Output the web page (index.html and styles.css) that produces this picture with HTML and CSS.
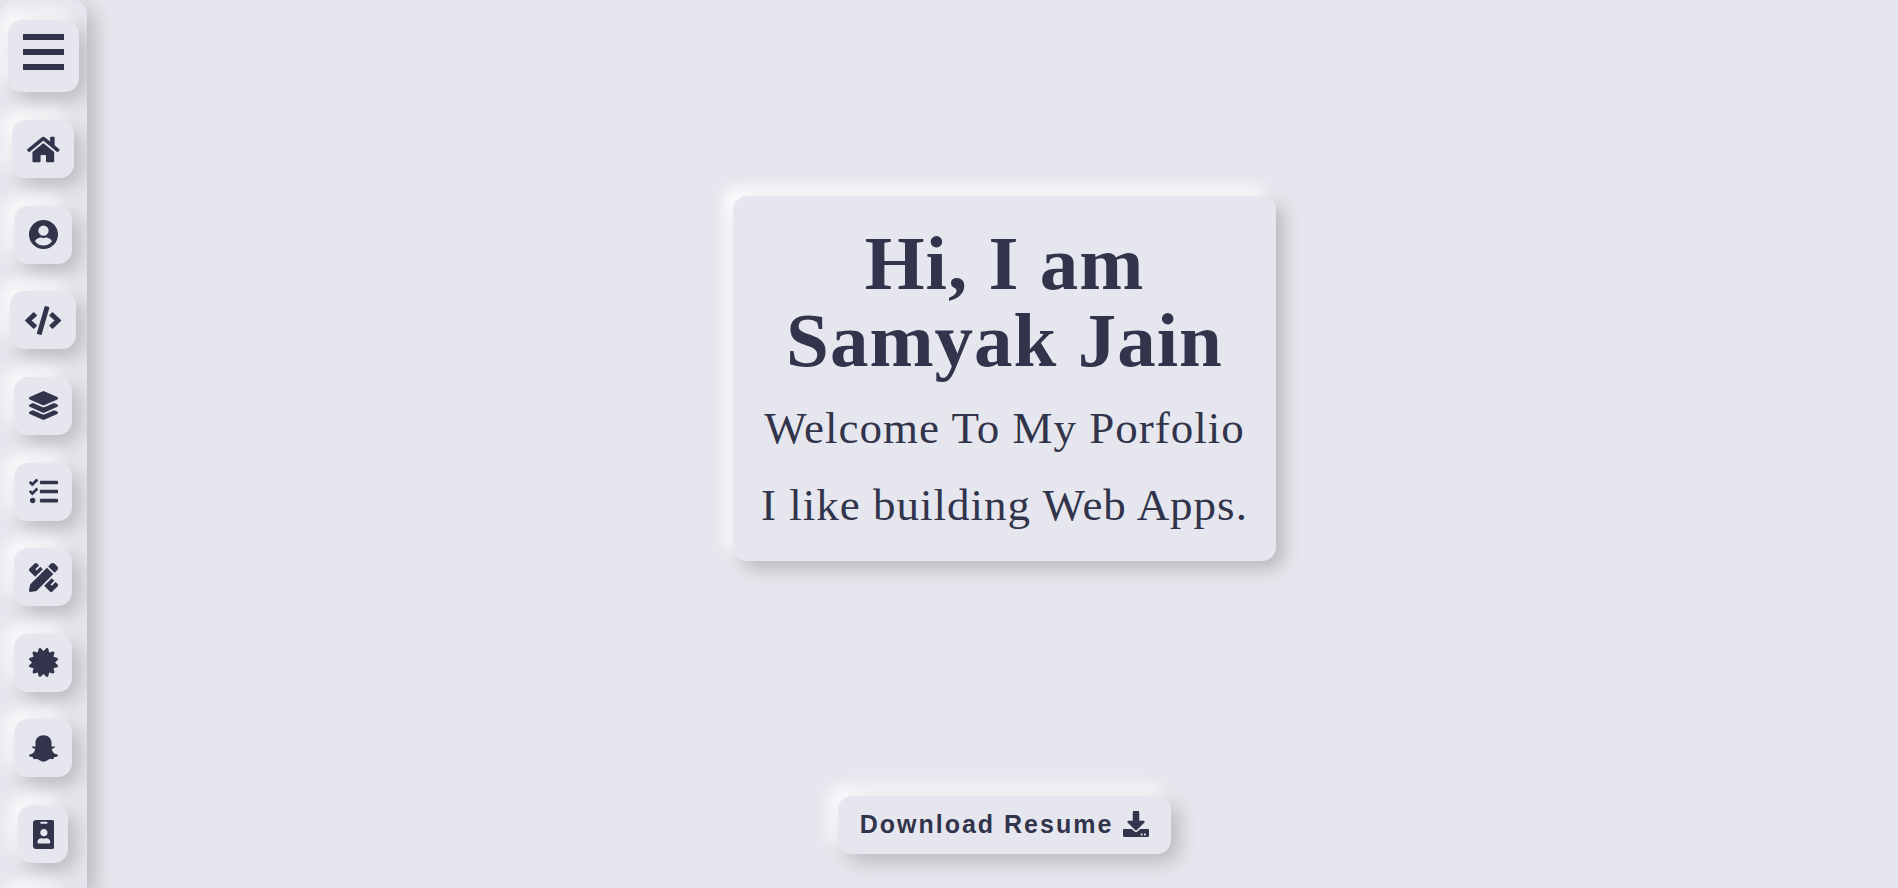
FILE: index.html
```html
<!DOCTYPE html>
<html lang="en">
<head>
<meta charset="utf-8">
<meta name="viewport" content="width=device-width, initial-scale=1">
<title>Samyak Jain</title>
<link rel="stylesheet" href="styles.css">
</head>
<body>
<nav class="sidebar" aria-label="Main">
  <button class="raised menu-toggle" type="button" aria-label="Menu">
    <span class="bar"></span><span class="bar"></span><span class="bar"></span>
  </button>
  <ul class="nav-list">
    <li><a class="raised nav-link" href="#home" aria-label="Home"><svg class="icon" viewBox="0 0 576 512"><path d="M280.37 148.26L96 300.11V464a16 16 0 0 0 16 16l112.06-.29a16 16 0 0 0 15.92-16V368a16 16 0 0 1 16-16h64a16 16 0 0 1 16 16v95.64a16 16 0 0 0 16 16.05L464 480a16 16 0 0 0 16-16V300L295.67 148.26a12.19 12.19 0 0 0-15.3 0zM571.6 251.47L488 182.56V44.05a12 12 0 0 0-12-12h-56a12 12 0 0 0-12 12v72.61L318.47 43a48 48 0 0 0-61 0L4.34 251.47a12 12 0 0 0-1.6 16.9l25.5 31A12 12 0 0 0 45.15 301l235.22-193.74a12.19 12.19 0 0 1 15.3 0L530.9 301a12 12 0 0 0 16.9-1.6l25.5-31a12 12 0 0 0-1.7-16.93z"/></svg></a></li>
    <li><a class="raised nav-link" href="#about" aria-label="About"><svg class="icon" viewBox="0 0 512 512"><path fill-rule="evenodd" d="M256 0a256 256 0 1 0 0 512a256 256 0 1 0 0-512zM256 96a91 91 0 1 1 0 182a91 91 0 1 1 0-182zM256 452c-62 0-117-31-150-77c18-42 72-65 106-65c12 0 20 9 44 9s32-9 44-9c34 0 88 23 106 65c-33 46-88 77-150 77z"/></svg></a></li>
    <li><a class="raised nav-link" href="#skills" aria-label="Skills"><svg class="icon" viewBox="0 0 640 512"><path d="M278.9 511.5l-61-17.7c-6.4-1.8-10-8.5-8.2-14.9L346.2 8.7c1.8-6.4 8.5-10 14.9-8.2l61 17.7c6.4 1.8 10 8.5 8.2 14.9L293.8 503.3c-1.9 6.4-8.5 10.1-14.9 8.2zm-114-112.2l43.5-46.4c4.6-4.9 4.3-12.7-.8-17.2L117 256l90.6-79.7c5.1-4.5 5.5-12.3.8-17.2l-43.5-46.4c-4.5-4.8-12.1-5.1-17-.5L3.8 247.2c-5.1 4.7-5.1 12.8 0 17.5l144.1 135.1c4.9 4.6 12.5 4.4 17-.5zm327.2.6l144.1-135.1c5.1-4.7 5.1-12.8 0-17.5L492.1 112.1c-4.8-4.5-12.4-4.3-17 .5L431.6 159c-4.6 4.9-4.3 12.7.8 17.2L523 256l-90.6 79.7c-5.1 4.5-5.5 12.3-.8 17.2l43.5 46.4c4.5 4.9 12.1 5.1 17 .6z"/></svg></a></li>
    <li><a class="raised nav-link" href="#stack" aria-label="Stack"><svg class="icon" viewBox="0 0 512 512"><path d="M12.41 148.02l232.94 105.67c6.8 3.09 14.49 3.09 21.29 0l232.94-105.67c16.55-7.51 16.55-32.52 0-40.03L266.65 2.31a25.607 25.607 0 0 0-21.29 0L12.41 107.98c-16.55 7.51-16.55 32.53 0 40.04zm487.18 88.28l-58.09-26.33-161.64 73.27c-7.56 3.43-15.59 5.17-23.86 5.17s-16.29-1.74-23.86-5.17L70.51 209.97l-58.1 26.33c-16.55 7.5-16.55 32.5 0 40l232.94 105.59c6.8 3.08 14.49 3.08 21.29 0L499.59 276.3c16.55-7.5 16.55-32.5 0-40zm0 127.8l-57.87-26.23-161.86 73.37c-7.56 3.43-15.59 5.17-23.86 5.17s-16.29-1.74-23.86-5.17L70.29 337.87 12.41 364.1c-16.55 7.5-16.55 32.5 0 40l232.94 105.59c6.8 3.08 14.49 3.08 21.29 0L499.59 404.1c16.55-7.5 16.55-32.5 0-40z"/></svg></a></li>
    <li><a class="raised nav-link" href="#tasks" aria-label="Tasks"><svg class="icon" viewBox="0 0 512 512"><path d="M139.61 35.5a12 12 0 0 0-17 0L58.93 98.81l-22.7-22.12a12 12 0 0 0-17 0L3.53 92.41a12 12 0 0 0 0 17l47.59 47.4a12.78 12.78 0 0 0 17.61 0l15.59-15.62L156.52 69a12.09 12.09 0 0 0 .09-17zm0 159.19a12 12 0 0 0-17 0l-63.68 63.72-22.7-22.1a12 12 0 0 0-17 0L3.53 252a12 12 0 0 0 0 17L51 316.5a12.77 12.77 0 0 0 17.6 0l15.7-15.69 72.2-72.22a12 12 0 0 0 .09-16.9zM64 368c-26.49 0-48.59 21.5-48.59 48S37.53 464 64 464a48 48 0 0 0 0-96zm432 16H208a16 16 0 0 0-16 16v32a16 16 0 0 0 16 16h288a16 16 0 0 0 16-16v-32a16 16 0 0 0-16-16zm0-320H208a16 16 0 0 0-16 16v32a16 16 0 0 0 16 16h288a16 16 0 0 0 16-16V80a16 16 0 0 0-16-16zm0 160H208a16 16 0 0 0-16 16v32a16 16 0 0 0 16 16h288a16 16 0 0 0 16-16v-32a16 16 0 0 0-16-16z"/></svg></a></li>
    <li><a class="raised nav-link" href="#projects" aria-label="Projects"><svg class="icon" viewBox="0 0 512 512"><path d="M109.46 244.04l134.58-134.56-44.12-44.12-61.68 61.68a7.919 7.919 0 0 1-11.21 0l-11.21-11.21c-3.1-3.1-3.1-8.12 0-11.21l61.68-61.68-33.64-33.65C131.47-3.1 111.39-3.1 99 9.29L9.29 99c-12.38 12.39-12.39 32.47 0 44.86l100.17 100.18zm388.47-116.8c18.76-18.76 18.75-49.17 0-67.93l-45.25-45.25c-18.76-18.76-49.18-18.76-67.95 0l-46.02 46.01 113.2 113.2 46.02-46.03zM316.08 82.71l-297 296.96L.32 487.11c-2.53 14.49 10.09 27.11 24.59 24.56l107.45-18.84L429.28 195.9 316.08 82.71zm186.63 285.43l-33.64-33.64-61.68 61.68c-3.1 3.1-8.12 3.1-11.21 0l-11.21-11.21c-3.09-3.1-3.09-8.12 0-11.21l61.68-61.68-44.14-44.14L267.93 402.5l100.21 100.2c12.39 12.39 32.47 12.39 44.86 0l89.71-89.7c12.39-12.39 12.39-32.47 0-44.86z"/></svg></a></li>
    <li><a class="raised nav-link" href="#certificates" aria-label="Certificates"><svg class="icon" viewBox="0 0 512 512"><path d="M458.622 255.92l45.985-45.005c13.708-12.977 7.316-36.039-10.664-40.339l-62.65-15.99 17.661-62.015c4.991-17.838-11.829-34.663-29.661-29.671l-61.994 17.667-15.984-62.671C337.085.197 313.765-6.276 300.99 7.228L256 53.57 211.011 7.229c-12.63-13.351-36.047-7.234-40.325 10.668l-15.984 62.671-61.995-17.667C74.87 57.907 58.056 74.738 63.046 92.572l17.661 62.015-62.65 15.99C.069 174.878-6.31 197.944 7.392 210.915l45.985 45.005-45.985 45.004c-13.708 12.977-7.316 36.039 10.664 40.339l62.65 15.99-17.661 62.015c-4.991 17.838 11.829 34.663 29.661 29.671l61.994-17.667 15.984 62.671c4.439 18.575 27.696 24.018 40.325 10.668L256 458.61l44.989 46.001c12.5 13.488 35.987 7.486 40.325-10.668l15.984-62.671 61.994 17.667c17.836 4.994 34.651-11.837 29.661-29.671l-17.661-62.015 62.65-15.99c17.987-4.302 24.366-27.367 10.664-40.339l-45.984-45.004z"/></svg></a></li>
    <li><a class="raised nav-link" href="#social" aria-label="Snapchat"><svg class="icon" viewBox="0 0 512 512"><path d="M256 24c-82 0-142 54-142 132v66c-16 8-34-8-50-4c-12 5-10 22 2 28c16 8 46 12 42 30c-14 42-44 76-98 88c-12 4-12 20 0 27c20 12 50 12 58 20c6 8 2 28 14 32c16 4 38-8 64 0c34 10 56 48 110 48s76-38 110-48c26-8 48 4 64 0c12-4 8-24 14-32c8-8 38-8 58-20c12-7 12-23 0-27c-54-12-84-46-98-88c-4-18 26-22 42-30c12-6 14-23 2-28c-16-4-34 12-50 4v-66c0-78-60-132-142-132z"/></svg></a></li>
    <li><a class="raised nav-link" href="#contact" aria-label="Contact"><svg class="icon" viewBox="0 0 384 512"><path d="M336 0H48C21.5 0 0 21.5 0 48v416c0 26.5 21.5 48 48 48h288c26.5 0 48-21.5 48-48V48c0-26.5-21.5-48-48-48zM144 32h96c8.8 0 16 7.2 16 16s-7.2 16-16 16h-96c-8.8 0-16-7.2-16-16s7.2-16 16-16zm48 128c35.3 0 64 28.7 64 64s-28.7 64-64 64-64-28.7-64-64 28.7-64 64-64zm112 236.8c0 10.6-10 19.2-22.4 19.2H102.4C90 416 80 407.4 80 396.8v-19.2c0-31.8 30.1-57.6 67.2-57.6h5c12.3 5.1 25.7 8 39.8 8s27.6-2.9 39.8-8h5c37.1 0 67.2 25.8 67.2 57.6v19.2z"/></svg></a></li>
  </ul>
  <a class="raised nav-link" href="#more" aria-label="More"><svg class="icon" viewBox="0 0 512 512"><circle cx="256" cy="256" r="200"/></svg></a>
</nav>
<main class="hero">
  <section class="raised intro">
    <h1 class="title">Hi, I am<br>Samyak Jain</h1>
    <p class="lead">Welcome To My Porfolio</p>
    <p class="lead">I like building Web Apps.</p>
  </section>
  <button class="raised download" type="button">Download Resume
    <svg class="download-icon" viewBox="0 0 512 512" aria-hidden="true"><path d="M216 0h80c13.3 0 24 10.7 24 24v168h87.7c17.8 0 26.7 21.5 14.1 34.1L269.7 378.3c-7.5 7.5-19.8 7.5-27.3 0L90.1 226.1c-12.6-12.6-3.7-34.1 14.1-34.1H192V24c0-13.3 10.7-24 24-24zm296 376v112c0 13.3-10.7 24-24 24H24c-13.3 0-24-10.7-24-24V376c0-13.3 10.7-24 24-24h146.7l49 49c20.1 20.1 52.5 20.1 72.6 0l49-49H488c13.3 0 24 10.7 24 24zm-124 88c0-11-9-20-20-20s-20 9-20 20 9 20 20 20 20-9 20-20zm64 0c0-11-9-20-20-20s-20 9-20 20 9 20 20 20 20-9 20-20z"/></svg>
  </button>
</main>
</body>
</html>
```
FILE: styles.css
```css
:root {
  --surface: #e6e7ee;
  --ink: #31344b;
}

* {
  box-sizing: border-box;
  margin: 0;
}

body {
  display: flex;
  gap: 24px;
  height: 100vh;
  overflow: hidden;
  background: var(--surface);
  color: var(--ink);
  font-family: "Liberation Serif", "Times New Roman", serif;
}

.raised {
  border: 0;
  border-radius: 14px;
  background: var(--surface);
  color: inherit;
  box-shadow: 8px 8px 20px #b8b9be, -8px -8px 16px #fff;
}

.sidebar {
  display: grid;
  grid-template-rows: auto calc(100vh - 145px) auto;
  row-gap: 28px;
  justify-items: center;
  flex: none;
  width: 87px;
  height: 100vh;
  padding: 20px 1px 0 0;
  overflow: hidden;
  border-radius: 14px 14px 0 0;
  background: var(--surface);
  box-shadow: 8px 8px 20px #b8b9be;
}

.menu-toggle {
  display: flex;
  flex-direction: column;
  gap: 9px;
  width: 71px;
  height: 72px;
  padding: 14px 15px;
}

.bar {
  width: 41px;
  height: 6px;
  background: currentColor;
}

.nav-list {
  display: flex;
  flex-direction: column;
  align-items: center;
  justify-content: space-between;
  padding: 0;
  list-style: none;
}

.nav-link {
  display: flex;
  align-items: center;
  height: 58px;
  padding: 0 14px 0 15px;
}

.icon {
  height: 29px;
  fill: currentColor;
}

.hero {
  display: flex;
  flex: 1;
  flex-direction: column;
  align-items: center;
  justify-content: space-between;
  padding: 196px 0 34px;
}

.intro {
  padding: 29px 28px 30px;
  box-shadow: 8px 8px 18px #b8b9be, -8px -8px 14px #fff;
  text-align: center;
}

.title {
  margin-bottom: 23px;
  font-size: 77px;
  line-height: 77px;
  letter-spacing: 1px;
}

.lead {
  font-size: 45px;
  line-height: 52px;
  letter-spacing: 1px;
}

.lead + .lead {
  margin-top: 25px;
}

.download {
  display: flex;
  align-items: center;
  gap: 10px;
  height: 58px;
  padding: 0 22px 2px;
  font: bold 25px "Liberation Sans", Arial, sans-serif;
  letter-spacing: 2px;
}

.download-icon {
  width: 26px;
  height: 26px;
  fill: currentColor;
}
```
